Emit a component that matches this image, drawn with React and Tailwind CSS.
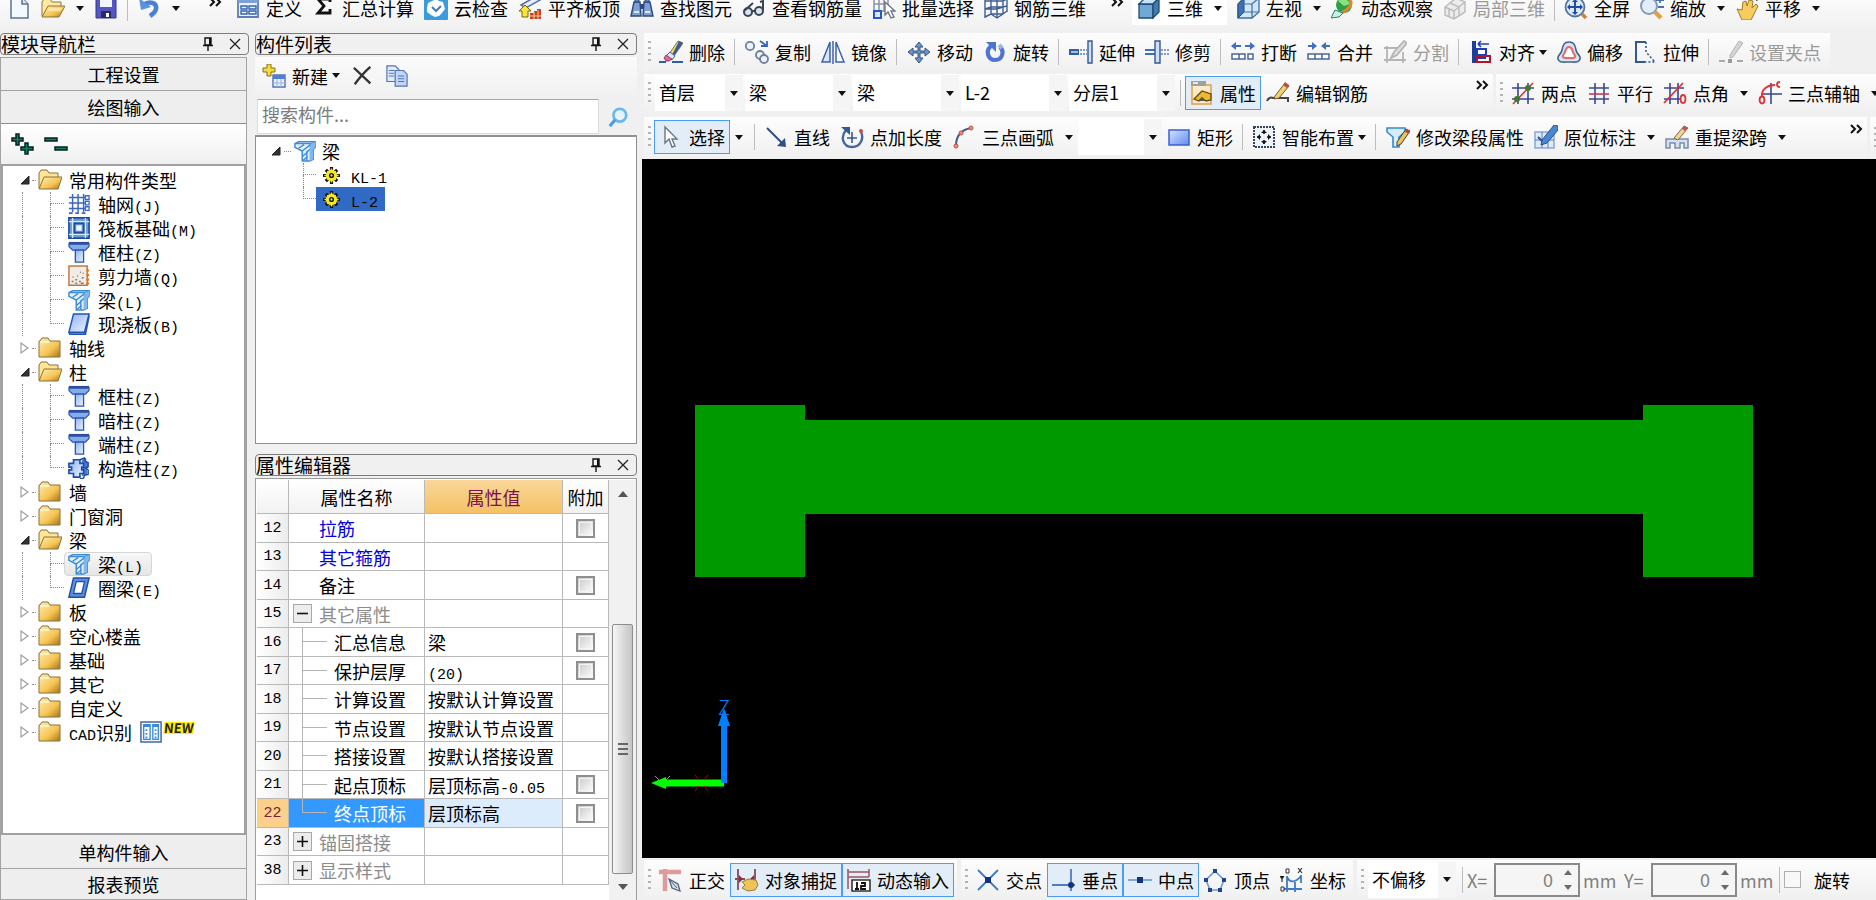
import { useState } from "react";
import clsx from "clsx";

const UI_FONT = "font-['Noto_Sans_CJK_SC',sans-serif]";
const MONO_FONT = "font-['Liberation_Mono','Noto_Sans_CJK_SC',monospace]";

const ICONS = {
  file: (
    <>
      <path d="M4 2h11l6 6v14H4z" fill="#f4f8ff" stroke="#5f7191" strokeWidth="1.5" />
      <path d="M15 2v6h6" fill="#dbe6f7" stroke="#5f7191" strokeWidth="1.5" />
    </>
  ),
  open: (
    <>
      <path d="M1 20V6l2-3h6l2 3h9v5" fill="#ffe9a3" stroke="#8e7440" />
      <path d="M1 21l6-11h17l-6 11z" fill="url(#folderFill)" stroke="#8e7440" />
      <path d="M8 12h13l-2 3H7z" fill="#ffe6a0" />
    </>
  ),
  save: (
    <>
      <path d="M2 2h18l2 2v18H2z" fill="#5556c4" stroke="#34348c" />
      <path d="M6 2h12v9H6z" fill="#f3f5fd" />
      <path d="M7 15h10v7H7z" fill="#2b2b63" />
      <path d="M12 17h3v4h-3z" fill="#fff" />
    </>
  ),
  undo: (
    <>
      <path d="M6 9c7-5 14-2 13 4-1 4-3 5-6 7" fill="none" stroke="#4a7fd8" strokeWidth="4.5" />
      <path d="M2 2l2 12 10-3z" fill="#5d8fe2" />
    </>
  ),
  define: (
    <>
      <path d="M2 3h20v18H2z" fill="#eef4fe" stroke="#5b7db8" strokeWidth="1.8" />
      <path d="M2 3h20v4H2z" fill="#7da0d8" />
      <path d="M5 10h6v3H5zM5 15h6v3H5zM13 10h7v3h-7zM13 15h7v3h-7z" fill="none" stroke="#3563b0" strokeWidth="1.4" />
    </>
  ),
  sigma: <path d="M18 6V3H6l6 7-6 7h12v-4" fill="none" stroke="#111" strokeWidth="2.8" />,
  cloud: (
    <>
      <rect x="0" y="0" width="24" height="24" rx="1" fill="#3c9bdc" />
      <path d="M12 3l3 2 4 1 1 4 1 3-3 4-3 3-4 1-4-2-4-3v-4l1-5 4-2z" fill="#fff" />
      <path d="M8 11l4 4 5-5" fill="none" stroke="#3c7fbc" strokeWidth="2" />
    </>
  ),
  slabTop: (
    <>
      <path d="M3 9L17 1l5 3-14 8z" fill="#e7ecf8" stroke="#5c6c9c" strokeWidth="1.5" />
      <path d="M1 15l6-6 6 6h-3v6H4v-6z" fill="#ffe23d" stroke="#7b6214" />
      <path d="M12 17h4v-2h3v-2h4v10H12z" fill="#c6451e" />
      <path d="M12 20h11M16 16v7M20 14v9" stroke="#f4c9a8" />
    </>
  ),
  binoculars: (
    <>
      <path d="M1 20L4 6h6l1 14zM13 20l1-14h6l3 14z" fill="#7fa0d2" stroke="#2e4a80" strokeWidth="1.4" />
      <path d="M10 8h4v5h-4z" fill="#2e4a80" />
      <path d="M5 1h4v5H5zM15 1h4v5h-4z" fill="#5b82bd" stroke="#2e4a80" />
      <path d="M4 16h5M15 16h5" stroke="#dce8fa" strokeWidth="2" />
    </>
  ),
  glasses: (
    <g fill="none" stroke="#3b4452" strokeWidth="2">
      <circle cx="6" cy="16" r="4" fill="#d8e5f5" />
      <circle cx="17" cy="15" r="4" fill="#d8e5f5" />
      <path d="M10 15h3M2 15l9-8M21 14V5l-3 1" />
    </g>
  ),
  batch: (
    <>
      <path d="M2 2h14v13H2zM2 8h14M7 2v13M12 2v13" fill="none" stroke="#8a93ab" strokeWidth="1.5" />
      <path d="M2 15h7v7H2z" fill="#dbe7ff" stroke="#2458c8" strokeWidth="2" />
      <path d="M13 6v13l3-3 3 6 3-1-3-6h4z" fill="#fff" stroke="#6e7687" strokeWidth="1.4" />
    </>
  ),
  cage: (
    <path
      d="M1 2v20M7 1v17M13 2v20M19 1v17M23 1v15M1 5h18l4-2M1 13l6-2h12l4-1M1 21l6-3h12M7 18l6 4 6-4 4-3M13 22l6-4M1 13h12l6-2"
      fill="none"
      stroke="#3f5f94"
      strokeWidth="1.4"
    />
  ),
  cube: (
    <>
      <path d="M2 8h14v14H2z" fill="#6fa9d4" stroke="#1f4a78" strokeWidth="1.3" />
      <path d="M2 8l6-6h14l-6 6z" fill="#c5e3f6" stroke="#1f4a78" strokeWidth="1.3" />
      <path d="M16 8l6-6v14l-6 6z" fill="#3f7cb0" stroke="#1f4a78" strokeWidth="1.3" />
    </>
  ),
  cubeLeft: (
    <>
      <path d="M2 8l6-6h15v14l-7 6H2z" fill="#d2e6f6" stroke="#3e6ea6" strokeWidth="1.3" />
      <path d="M2 8l6-6v14l-6 6z" fill="#3e72b4" stroke="#1f4a88" />
      <path d="M8 16h15M16 8v14M2 8h14l7-6" fill="none" stroke="#3e6ea6" strokeWidth="1.2" />
    </>
  ),
  orbit: (
    <>
      <circle cx="13" cy="9" r="8" fill="#2ba04a" />
      <path d="M7 5c4-4 10-2 12 3l-6 2z" fill="#8be07f" />
      <path d="M18 4c6 3-2 11-8 13" stroke="#e0862c" strokeWidth="3" fill="none" />
      <path d="M0 22l4-8 8 3-4 4z" fill="#c6f0e1" stroke="#2a7e68" />
    </>
  ),
  partial: (
    <g fill="#ececec" stroke="#bdbdbd" strokeWidth="1.5">
      <path d="M2 11l11-9 9 4v10l-11 7-9-4z" />
      <path d="M2 11l9 4 11-9M11 15v8M7 7l9 4v9M6 13v8" fill="none" />
    </g>
  ),
  fullscreen: (
    <>
      <circle cx="11" cy="11" r="9.5" fill="#dbe9fb" stroke="#56749f" strokeWidth="1.8" />
      <path d="M11 3l3 3h-2v4h4V8l3 3-3 3v-2h-4v4h2l-3 3-3-3h2v-4H6v2l-3-3 3-3v2h4V6H8z" fill="#1d4ea8" />
      <path d="M18 18l4 4" stroke="#c98546" strokeWidth="3.5" />
    </>
  ),
  zoom: (
    <>
      <circle cx="9" cy="10" r="8" fill="#e3eefb" stroke="#8799b4" strokeWidth="2" />
      <path d="M15 16l6 6" stroke="#dba545" strokeWidth="4.5" />
      <path d="M16 4h8M20 1v6M18 11h6" stroke="#4870b4" strokeWidth="1.8" />
    </>
  ),
  hand: (
    <>
      <path d="M2 13l5 1 1-8 3-1 1 5 2-6 4 1-1 7 4-4 2 2-4 8-3 6H7z" fill="#f5cc5f" stroke="#a57a24" />
      <path d="M13 3l8-2 1 4" fill="none" stroke="#555" strokeWidth="1.5" />
    </>
  ),
  erase: (
    <>
      <path d="M10 14L19 1l5 2-9 13z" fill="#f6d86c" stroke="#8b7a46" />
      <path d="M20 1l4 2-9 13-2-1z" fill="#3c5c97" />
      <path d="M11 12l5 4-3 4-6-4z" fill="#dfe6f2" stroke="#4a5f8e" />
      <path d="M7 15l6 4-3 2H7l-2-3z" fill="#e85b9c" stroke="#8a4f66" />
      <path d="M0 22h7M13 22h11" stroke="#2b5fa8" strokeWidth="2.2" />
    </>
  ),
  copy: (
    <g fill="#edf1f8" stroke="#6f7f99" strokeWidth="1.8">
      <circle cx="5" cy="6" r="4.2" />
      <circle cx="15" cy="15" r="4" />
      <circle cx="19" cy="19" r="4" />
      <path d="M15 1l7 5M22 1v5h-6" fill="none" stroke="#3367bd" />
    </g>
  ),
  mirror: (
    <>
      <path d="M9 2v20H1z" fill="#d7e6fa" stroke="#3c62a8" strokeWidth="1.5" />
      <path d="M15 2v20h8z" fill="#fff" stroke="#3c62a8" strokeWidth="1.5" />
      <path d="M12 1v23" stroke="#3c62a8" strokeWidth="1.5" />
    </>
  ),
  move: (
    <path
      d="M12 2l4 5h-3v4h5V8l5 4-5 4v-3h-5v5h3l-4 5-4-5h3v-5H6v3l-5-4 5-4v3h5V7H8z"
      fill="#6f94c4"
      stroke="#345586"
    />
  ),
  rotate: (
    <>
      <path d="M8 6c-6 5-3 14 4 14s10-8 5-13" fill="none" stroke="#4e74d0" strokeWidth="4.2" />
      <path d="M3 2h10v10z" fill="#4e74d0" />
      <path d="M19 8l-3-3" stroke="#9db6ea" strokeWidth="4" />
    </>
  ),
  extend: (
    <>
      <path d="M0 9h10v6H0z" fill="#2f5f9c" />
      <path d="M2 12h7" stroke="#d9e7fa" strokeWidth="1.4" />
      <path d="M11 10h7M11 14h7" stroke="#5d7fb4" strokeWidth="1.5" strokeDasharray="2 1" />
      <path d="M19 1h4v22h-4z" fill="#cfe0f5" stroke="#35588f" strokeWidth="1.4" />
    </>
  ),
  trim: (
    <>
      <path d="M0 10h10M0 14h10" stroke="#3d6fb4" strokeWidth="1.8" />
      <path d="M10 1h5v22h-5z" fill="#cfe0f5" stroke="#35588f" strokeWidth="1.4" />
      <path d="M16 10h8M16 14h8" stroke="#5d7fb4" strokeWidth="1.5" strokeDasharray="2 1" />
    </>
  ),
  split2: (
    <>
      <path d="M0 6l5-4v3h5v2H5v3zM24 6l-5-4v3h-5v2h5v3z" fill="#3f6fc4" />
      <path d="M1 14h13v5H1zM17 14h5v5h-5z" fill="#fff" stroke="#4a6898" strokeWidth="1.5" />
      <path d="M8 14v5" stroke="#4a6898" strokeWidth="1.5" />
    </>
  ),
  merge: (
    <>
      <path d="M10 6L5 2v3H1v2h4v3zM14 6l5-4v3h4v2h-4v3z" fill="#3f6fc4" />
      <path d="M1 14h21v5H1z" fill="#fff" stroke="#4a6898" strokeWidth="1.5" />
      <path d="M8 14v5M15 14v5" stroke="#4a6898" strokeWidth="1.5" />
    </>
  ),
  divide: (
    <g fill="none" stroke="#b5b5b5" strokeWidth="1.8">
      <path d="M1 8h14M4 6v17M1 20h22M20 12v11" />
      <path d="M8 18l3-6L21 1l3 2-10 12z" fill="#dedede" />
    </g>
  ),
  align: (
    <>
      <path d="M5 1v22" stroke="#1c3f98" strokeWidth="4" />
      <path d="M9 4h11M9 4l3-3M9 4l3 3" stroke="#1c3fb8" strokeWidth="1.6" />
      <path d="M8 9h9v6H8z" fill="#fff" stroke="#1c3fb8" strokeWidth="2" />
      <path d="M8 16h13v6H8z" fill="#fff" stroke="#b4122a" strokeWidth="2" />
      <path d="M8 18h9" stroke="#1c3fb8" strokeWidth="2" />
    </>
  ),
  offset: (
    <>
      <path
        d="M12 2c5 0 6 3 7 8s5 5 4 9-5 3-11 3-10 1-11-3 3-4 4-9 2-8 7-8z"
        fill="#d3e6f2"
        stroke="#42648f"
        strokeWidth="1.6"
      />
      <path
        d="M12 7c3 0 3 2 4 5s3 3 2 5-3 1-6 1-5 1-6-1 1-2 2-5 1-5 4-5z"
        fill="#fff"
        stroke="#e07070"
        strokeWidth="2.2"
      />
    </>
  ),
  stretch: (
    <>
      <path d="M13 2H3v20h9" fill="none" stroke="#35588f" strokeWidth="2" />
      <path d="M13 2v10l9 10H12" fill="none" stroke="#35588f" strokeWidth="1.6" strokeDasharray="2 2" />
    </>
  ),
  grips: (
    <>
      <path d="M11 15L20 1l4 2-10 14-3 1z" fill="#d4d4d4" stroke="#b4b4b4" />
      <path d="M0 21h6M18 21h6" stroke="#a9a9a9" strokeWidth="2" />
      <path d="M9 19h4v4H9z" fill="#9c9c9c" />
    </>
  ),
  props: (
    <>
      <path d="M2 4h19v19H2z" fill="#fdebc8" stroke="#e0a04a" strokeWidth="1.5" />
      <path d="M1 0h15v5H1z" fill="#a0a0a0" />
      <path d="M3 2h5" stroke="#fff" strokeWidth="1.5" />
      <path d="M4 18l8-8 9 3v6l-5 1-4-3-3 3z" fill="#eeb82e" stroke="#63480f" strokeWidth="1.3" />
      <path d="M8 20l4-4 3 4" fill="#555" />
    </>
  ),
  editRebar: (
    <>
      <path d="M1 20c1-3 4-4 6-3h15v4" fill="none" stroke="#444" strokeWidth="2" />
      <path d="M9 15L19 2l4 3-10 12-5 1z" fill="#f0cf78" stroke="#6e5a2a" />
      <path d="M19 1l4 3-2 3-4-3z" fill="#c94a3a" />
    </>
  ),
  twoPoint: (
    <>
      <path d="M7 2v21M17 2v21M1 7h22M1 18h22" stroke="#3a4692" strokeWidth="1.6" />
      <path d="M2 23L22 2" stroke="#e03030" strokeWidth="1.6" />
      <circle cx="17" cy="7" r="3" fill="#3e7a2c" />
      <circle cx="6" cy="18" r="3" fill="#3e7a2c" />
    </>
  ),
  parallel: (
    <>
      <path d="M8 2v21M17 2v21M2 7h20M2 18h20" stroke="#3a4692" strokeWidth="1.6" />
      <path d="M2 13h20" stroke="#c93a52" strokeWidth="1.6" />
    </>
  ),
  pointAngle: (
    <>
      <path d="M7 2v21M15 2v21M1 7h20M1 18h17" stroke="#3a4692" strokeWidth="1.6" />
      <path d="M1 22L20 2" stroke="#e03030" strokeWidth="1.8" />
      <ellipse cx="20" cy="18" rx="2.4" ry="4" fill="none" stroke="#e03030" strokeWidth="1.8" />
    </>
  ),
  threeAxis: (
    <>
      <path d="M13 2v21M4 13h20" stroke="#3a4692" strokeWidth="1.6" />
      <path d="M4 15C3 9 9 4 17 4" fill="none" stroke="#e03030" strokeWidth="1.8" />
      <ellipse cx="4" cy="19" rx="2.4" ry="3.5" fill="none" stroke="#e03030" strokeWidth="1.8" />
      <path d="M22 1c-4 0-4 5 0 5" fill="none" stroke="#e03030" strokeWidth="1.8" />
    </>
  ),
  cursor: <path d="M6 2v16l4-4 3 8 3-1-3-7h5z" fill="#fff" stroke="#6c7485" strokeWidth="1.4" />,
  line: (
    <>
      <path d="M3 3l17 17" stroke="#2f4f86" strokeWidth="2" />
      <path d="M22 22l-1-9-8 8z" fill="#2f4f86" />
    </>
  ),
  pointLength: (
    <>
      <path d="M6 5c-6 7-3 17 6 17s12-9 9-15" fill="none" stroke="#47679c" strokeWidth="2.4" />
      <path d="M1 2h9v8z" fill="#35588f" />
      <path d="M12 7v11M7 13h10" stroke="#35588f" strokeWidth="1.6" />
      <circle cx="21" cy="6" r="2" fill="#d24848" />
    </>
  ),
  arc: (
    <>
      <path d="M4 21C4 12 8 5 19 3" fill="none" stroke="#47597c" strokeWidth="2" />
      <g fill="#f08a7c" stroke="#c94d44">
        <circle cx="4" cy="21" r="2" />
        <circle cx="9" cy="8" r="2" />
        <circle cx="19" cy="3" r="2" />
      </g>
    </>
  ),
  rect: <path d="M2 5h20v15H2z" fill="url(#rectFill)" stroke="#3b5fd0" strokeWidth="1.5" />,
  smart: (
    <>
      <path d="M2 2h20v20H2z" fill="#eef3fa" stroke="#33455f" strokeWidth="2" strokeDasharray="2 1" />
      <path d="M12 5v4M12 15v4M5 12h4M15 12h4" stroke="#111" strokeWidth="1.6" />
      <path d="M9 8l3-3 3 3zM9 16l3 3 3-3zM8 9l-3 3 3 3zM16 9l3 3-3 3z" fill="#111" />
    </>
  ),
  editBeam: (
    <>
      <path d="M1 3h18v4l-6 5v10H7V12L1 7z" fill="#d9ecfd" stroke="#2f8ad8" strokeWidth="1.6" />
      <path d="M11 17L20 4l4 2-9 13-4 2z" fill="#eac45e" stroke="#4b3d24" />
      <path d="M20 4l4 2-1 3-4-2z" fill="#b9483a" />
    </>
  ),
  annotate: (
    <>
      <path d="M1 7h19v16H1z" fill="#dfeaf8" stroke="#8aa6d4" strokeWidth="1.5" />
      <path d="M1 15h19M8 7v16M14 16v7" stroke="#5b7db8" />
      <path d="M8 15L20 0l4 1v4L13 18l-6 2z" fill="#4a86d2" stroke="#2a508e" />
      <path d="M4 12l4 4" stroke="#2a508e" strokeWidth="2" />
    </>
  ),
  respan: (
    <>
      <path d="M1 23v-9h22v9h-4v-5h-4v5h-5v-5H5v5z" fill="#d5e0ef" stroke="#7b8da8" strokeWidth="1.5" />
      <path d="M9 13L19 1l4 2-10 12z" fill="#efd49a" stroke="#7d6a42" />
      <path d="M19 1l4 2-3 3-3-2z" fill="#bb5a50" />
    </>
  ),
  ortho: (
    <>
      <path d="M0 4h22M6 1v22" stroke="#dc9c9c" strokeWidth="4.5" />
      <path d="M10 11l9 5 2 7-8-3z" fill="#d5dde8" stroke="#50627c" strokeWidth="1.3" />
      <path d="M10 11l8 9" stroke="#50627c" />
    </>
  ),
  snap: (
    <>
      <path d="M3 1v21M20 1v12M0 11h10" stroke="#8a4a55" strokeWidth="1.8" />
      <path d="M4 7l4 4-4 4zM19 7l-4 4 4 4z" fill="#8a2f3f" />
      <path d="M7 14l6-3 8 1 2 5-3 5-7 1-6-3 3-3z" fill="#eec35a" stroke="#9f7c36" />
    </>
  ),
  dynInput: (
    <>
      <path d="M1 1v20M22 1v8M1 4h21M1 9h21" stroke="#a0525f" strokeWidth="1.5" />
      <path d="M5 12h18v11H5z" fill="#fff" stroke="#333" strokeWidth="1.6" />
      <path d="M10 14v7M8 21h4M14 15h4v3h-4v3h5" fill="none" stroke="#111" strokeWidth="1.8" />
    </>
  ),
  cross: (
    <>
      <path d="M2 2l20 20M22 2L2 22" stroke="#3d7ac8" strokeWidth="1.8" />
      <path d="M9 9h6v6H9z" fill="#12347c" />
    </>
  ),
  perp: (
    <>
      <path d="M0 17h23M19 1v22" stroke="#4a7dc6" strokeWidth="1.8" />
      <circle cx="19" cy="17" r="3" fill="#12347c" />
    </>
  ),
  mid: (
    <>
      <path d="M0 12h24" stroke="#7fa8dc" strokeWidth="2" />
      <path d="M9 9h6v6H9z" fill="#12347c" />
    </>
  ),
  vertex: (
    <>
      <path d="M11 3l9 9-4 10H6L2 12z" fill="none" stroke="#7298cc" strokeWidth="1.6" />
      <path d="M9 1h4v4H9zM0 10h4v4H0zM18 10h4v4h-4zM4 20h4v4H4zM14 20h4v4h-4z" fill="#1f448f" />
    </>
  ),
  coord: (
    <>
      <path d="M7 8v16M4 21h18M7 9c3 6 8 6 14-1M21 7v8M15 14v10" fill="none" stroke="#3d7ac8" strokeWidth="1.8" />
      <path d="M6 1h3v4H6zM1 19h3v4H1z" fill="none" stroke="#333" />
      <path d="M18 0l4 5M22 0l-4 5M0 8l2 3 2-3M2 11v3" stroke="#333" strokeWidth="1.2" />
    </>
  ),
  newItem: (
    <>
      <path d="M5 0h4v4h4v4H9v4H5V8H1V4h4z" fill="#f5dc3c" stroke="#86721a" />
      <path d="M11 11h12v12H11z" fill="#e8f0fc" stroke="#5474b0" strokeWidth="1.4" />
      <path d="M11 11h12v4H11z" fill="#4f7fd0" />
      <path d="M11 19h12M15 15v8M19 15v8" stroke="#9ab4dc" />
    </>
  ),
  remove: <path d="M2 3l18 17M20 2C13 8 8 14 3 21" fill="none" stroke="#333" strokeWidth="2.6" />,
  pages: (
    <g fill="#dfeaff" stroke="#4f74b8" strokeWidth="1.3">
      <path d="M1 1h9l4 4v13H1z" />
      <path d="M3 6h6M3 9h6M3 12h6" />
      <path d="M10 6h9l4 4v13H10z" fill="#c4d6f7" />
      <path d="M13 12h7M13 15h7M13 18h7" />
    </g>
  ),
  magnifier: (
    <>
      <circle cx="14" cy="10" r="7" fill="#e6f4ff" stroke="#6db7ec" strokeWidth="3" />
      <path d="M9 15l-6 7" stroke="#4a9fe0" strokeWidth="3.5" />
    </>
  ),
  folder: (
    <>
      <path d="M1 5h1l2-3h6l2 3h10v16H1z" fill="url(#folderFill)" stroke="#8b7138" />
      <path d="M2 6h9" stroke="#fff3c4" strokeWidth="2" />
    </>
  ),
  folderOpen: (
    <>
      <path d="M1 20V5l2-3h6l2 3h9v5" fill="#ffe596" stroke="#8b7138" />
      <path d="M1 21l5-12h18l-4 12z" fill="url(#folderFill)" stroke="#8b7138" />
    </>
  ),
  grid: (
    <>
      <path d="M5 1v20M11 1v20M17 1v20M1 5h18M1 11h18M1 17h18" stroke="#3b66c4" strokeWidth="1.6" />
      <g fill="#fff" stroke="#3b66c4" strokeWidth="1.4">
        <path d="M19 3h4v4h-4zM19 9h4v4h-4zM19 15h4v4h-4z" />
      </g>
      <path d="M1 21h4v2H1zM8 21h4v2H8zM15 21h4v2h-4z" fill="#3b66c4" />
    </>
  ),
  raft: (
    <>
      <path d="M1 1h22v22H1z" fill="#6f9dd8" stroke="#1c4e9c" strokeWidth="1.8" />
      <path d="M5 1v22M19 1v22M1 5h22M1 19h22" stroke="#d8e8fb" strokeWidth="1.4" />
      <path d="M7 7h10v10H7z" fill="#6f9dd8" stroke="#1c4e9c" strokeWidth="1.8" />
      <path d="M9 9h6v6H9z" fill="#eef5fe" />
    </>
  ),
  column: (
    <>
      <path d="M1 3h22v3l-4 4H5L1 6z" fill="#86a9ee" stroke="#2a55b0" strokeWidth="1.2" />
      <path d="M1 1h22v3H1z" fill="#2c4f9c" />
      <path d="M8 10h9v13H8z" fill="url(#blueFill)" stroke="#2a55b0" strokeWidth="1.4" />
    </>
  ),
  wall: (
    <>
      <path d="M1 1h20v21H1z" fill="#f3ece4" stroke="#c07a4a" strokeWidth="1.6" />
      <path
        d="M4 18h2M8 16h2M12 18h2M15 14h2M8 20h2M14 20h3M10 12h1M16 9h1M5 13h1M13 8h1"
        stroke="#777"
        strokeWidth="1.6"
      />
      <path d="M20 6h3M20 11h3M20 16h3M20 20h3" stroke="#df7722" strokeWidth="2.4" />
    </>
  ),
  beam: (
    <>
      <path d="M1 4l4-2h18v6l-2 2v11l-4 2H9V12L1 8z" fill="#e2f0fd" stroke="#3b8ad8" strokeWidth="1.6" />
      <path d="M1 4h17l5-2M18 4v6l-4 3v10M5 9l6-4M9 12l9-7M9 18l6-5M10 22l5-4" fill="none" stroke="#3b8ad8" strokeWidth="1.5" />
      <path d="M18 4l5-2v6l-2 2v11l-4 2V11z" fill="#7db8ef" />
    </>
  ),
  slab: (
    <>
      <path d="M6 1h17l-5 20H1z" fill="url(#blueFill)" stroke="#1f55b0" strokeWidth="1.6" />
      <path d="M1 21l1 2h17l4-20" fill="none" stroke="#1f55b0" strokeWidth="1.8" />
    </>
  ),
  tieColumn: (
    <>
      <path d="M15 3l5-2v4l2 1v5l-2 2 1 2v4l-6 2z" fill="#4a78cc" />
      <path
        d="M6 3h7v4h4v4h-2v3h2v4h-4v4H6v-4H1v-4h3v-3H1V7h5z"
        fill="url(#blueFill)"
        stroke="#1f4ea8"
        strokeWidth="1.8"
      />
      <path d="M13 3l5-2 1 4 3 1v5l-3 1 3 2v5l-4 1-1 3-4 1" fill="none" stroke="#1f459c" strokeWidth="1.5" />
    </>
  ),
  ringBeam: (
    <>
      <path d="M6 1h17l-5 21H1z" fill="#5f8fdc" stroke="#1f4ea8" strokeWidth="1.6" />
      <path d="M9 5h9l-3 13H6z" fill="#fff" stroke="#1f4ea8" strokeWidth="1.4" />
    </>
  ),
  cad: (
    <>
      <path d="M1 1h22v22H1z" fill="#f2f7fe" stroke="#47679c" strokeWidth="1.6" />
      <path d="M4 4h7v16H4zM14 4h6v16h-6z" fill="#fff" stroke="#3b8ad8" strokeWidth="1.5" />
      <path d="M4 5h7M14 5h6" stroke="#3b8ad8" strokeWidth="3" />
      <path d="M7 9v11M17 9v11" stroke="#3b8ad8" strokeWidth="2" strokeDasharray="2 2" />
    </>
  ),
  gear: (
    <>
      <path d="M12 0v24M0 12h24M4 4l16 16M20 4L4 20" stroke="#111" strokeWidth="4.5" />
      <circle cx="12" cy="12" r="8" fill="#f4ea1c" />
      <path d="M12 2v20M2 12h20M6 6l12 12M18 6L6 18" stroke="#f4ea1c" strokeWidth="2.2" />
      <circle cx="12" cy="12" r="2.6" fill="#f4ea1c" stroke="#111" strokeWidth="2" />
    </>
  ),
  expandAll: (
    <g fill="#14806c" stroke="#06231f" strokeWidth="1.5">
      <path d="M6 2h3v4h4v3H9v4H6V9H2V6h4z" />
      <path d="M15 11h3v4h5v3h-5v4h-3v-4h-4v-3h4z" />
    </g>
  ),
  collapseAll: (
    <path d="M1 6h12v3H1zM11 15h12v3H11z" fill="#14806c" stroke="#06231f" strokeWidth="1.5" />
  ),
};

function Icon({ name, className = "size-6" }) {
  return (
    <svg viewBox="0 0 24 24" className={clsx("shrink-0", className)} aria-hidden="true">
      {ICONS[name]}
    </svg>
  );
}

// gradients shared by the icons above
function IconDefs() {
  return (
    <svg className="absolute size-0" aria-hidden="true">
      <defs>
        <linearGradient id="folderFill" x1="0" y1="0" x2="1" y2="1">
          <stop offset="0" stopColor="#fff0b4" />
          <stop offset="0.6" stopColor="#f5c451" />
          <stop offset="1" stopColor="#a8741a" />
        </linearGradient>
        <linearGradient id="blueFill" x1="0" y1="0" x2="1" y2="1">
          <stop offset="0" stopColor="#8fb2f2" />
          <stop offset="1" stopColor="#eef4ff" />
        </linearGradient>
        <linearGradient id="rectFill" x1="0" y1="0" x2="1" y2="1">
          <stop offset="0" stopColor="#d5e2ff" />
          <stop offset="1" stopColor="#5f8df0" />
        </linearGradient>
      </defs>
    </svg>
  );
}

function Caret({ className }) {
  return (
    <svg viewBox="0 0 8 5" className={clsx("h-[5px] w-2 shrink-0", className)} aria-hidden="true">
      <path d="M0 0h8L4 5z" fill="#111" />
    </svg>
  );
}

function Grip() {
  return (
    <svg viewBox="0 0 3 22" className="h-[22px] w-[3px] shrink-0" aria-hidden="true">
      <path d="M0 0h3v2H0zM0 6h3v2H0zM0 12h3v2H0zM0 18h3v2H0z" fill="#b4b4b4" />
    </svg>
  );
}

function More({ className }) {
  return (
    <button type="button" aria-label="更多" className={clsx("shrink-0", className)}>
      <svg viewBox="0 0 13 10" className="h-[10px] w-[13px]">
        <path d="M1 1l4 4-4 4M7 1l4 4-4 4" fill="none" stroke="#111" strokeWidth="2" />
      </svg>
    </button>
  );
}

function Sep({ className }) {
  return <span className={clsx("mx-1 h-[26px] w-px shrink-0 bg-[#bdbdbd]", className)} />;
}

function Bar({ className, children }) {
  return (
    <div
      className={clsx(
        "flex min-w-0 items-center overflow-hidden bg-linear-to-b from-[#fdfdfd] to-[#f0f0f0]",
        className
      )}
    >
      {children}
    </div>
  );
}

function Tool({ icon, label, active, disabled, caret, className }) {
  return (
    <button
      type="button"
      disabled={disabled}
      aria-pressed={active}
      className={clsx(
        "flex h-[34px] shrink-0 items-center border px-1 whitespace-nowrap",
        active ? "border-[#4a9cf5] bg-[#e3edf8]" : "border-transparent",
        disabled && "text-[#9a9a9a]",
        className
      )}
    >
      <Icon name={icon} />
      {label && <span className="ml-1.5">{label}</span>}
      {caret && <Caret className={caret === "tight" ? "ml-1" : "ml-[11px]"} />}
    </button>
  );
}

function Combo({ label, value, className }) {
  return (
    <span className={clsx("relative h-9 shrink-0 bg-white", className)}>
      <select
        aria-label={label}
        defaultValue={value}
        className="h-full w-full appearance-none pb-0.5 pl-1 outline-none"
      >
        <option>{value}</option>
      </select>
      <span className="pointer-events-none absolute inset-y-0 right-0 flex w-[18px] items-center justify-center bg-[#f5f5f5]">
        <Caret />
      </span>
    </span>
  );
}

function TopToolbar() {
  return (
    <header className="h-[31px] shrink-0 overflow-hidden bg-linear-to-b from-[#fafafa] to-[#f0f0f0]">
      <div className="flex h-4 items-center pl-0.5">
        <Tool icon="file" />
        <Tool icon="open" caret />
        <Tool icon="save" />
        <Sep />
        <Tool icon="undo" caret />
        <More className="ml-6 pb-3" />
        <Tool icon="define" label="定义" className="ml-[9px]" />
        <Tool icon="sigma" label="汇总计算" />
        <Tool icon="cloud" label="云检查" />
        <Tool icon="slabTop" label="平齐板顶" />
        <Tool icon="binoculars" label="查找图元" />
        <Tool icon="glasses" label="查看钢筋量" />
        <Tool icon="batch" label="批量选择" />
        <Tool icon="cage" label="钢筋三维" />
        <More className="ml-5 pb-3" />
        <Tool icon="cube" label="三维" caret className="mr-1 ml-2 bg-white" />
        <Tool icon="cubeLeft" label="左视" caret />
        <Tool icon="orbit" label="动态观察" />
        <Tool icon="partial" label="局部三维" disabled />
        <Sep />
        <Tool icon="fullscreen" label="全屏" />
        <Tool icon="zoom" label="缩放" caret />
        <Tool icon="hand" label="平移" caret />
      </div>
    </header>
  );
}

function PanelTitle({ children }) {
  return (
    <div className="flex h-[22px] shrink-0 items-center rounded-sm border border-[#7d7d7d] bg-[#f0f0f0] text-[19px] leading-5">
      <h2 className="flex-1">{children}</h2>
      <button type="button" aria-label="固定" className="mr-4">
        <svg viewBox="0 0 10 14" className="h-[14px] w-[10px]">
          <path d="M2 1h6v7H2zM0 8.5h10M5 9v5" fill="none" stroke="#111" strokeWidth="1.4" />
          <path d="M7 1v7" stroke="#111" strokeWidth="2" />
        </svg>
      </button>
      <button type="button" aria-label="关闭" className="mr-[7px]">
        <svg viewBox="0 0 12 12" className="size-3">
          <path d="M1 1l10 10M11 1L1 11" stroke="#222" strokeWidth="1.3" />
        </svg>
      </button>
    </div>
  );
}

const TREE = [
  {
    label: "常用构件类型",
    open: true,
    children: [
      { icon: "grid", label: "轴网", hotkey: "(J)" },
      { icon: "raft", label: "筏板基础", hotkey: "(M)" },
      { icon: "column", label: "框柱", hotkey: "(Z)" },
      { icon: "wall", label: "剪力墙", hotkey: "(Q)" },
      { icon: "beam", label: "梁", hotkey: "(L)" },
      { icon: "slab", label: "现浇板", hotkey: "(B)" },
    ],
  },
  { label: "轴线" },
  {
    label: "柱",
    open: true,
    children: [
      { icon: "column", label: "框柱", hotkey: "(Z)" },
      { icon: "column", label: "暗柱", hotkey: "(Z)" },
      { icon: "column", label: "端柱", hotkey: "(Z)" },
      { icon: "tieColumn", label: "构造柱", hotkey: "(Z)" },
    ],
  },
  { label: "墙" },
  { label: "门窗洞" },
  {
    label: "梁",
    open: true,
    children: [
      { icon: "beam", label: "梁", hotkey: "(L)", selected: true },
      { icon: "ringBeam", label: "圈梁", hotkey: "(E)" },
    ],
  },
  { label: "板" },
  { label: "空心楼盖" },
  { label: "基础" },
  { label: "其它" },
  { label: "自定义" },
  { latin: "CAD", label: "识别", isNew: true },
];

function Expander({ open }) {
  return (
    <svg viewBox="0 0 10 12" className="h-3 w-[10px] shrink-0" aria-hidden="true">
      {open ? (
        <path d="M9 2v8H1z" fill="#333" stroke="#222" />
      ) : (
        <path d="M1 1l7 5-7 5z" fill="#fff" stroke="#a0a0a0" strokeWidth="1.2" />
      )}
    </svg>
  );
}

function Elbow({ last, className }) {
  return (
    <span className={clsx("flex h-full shrink-0 flex-col", className)}>
      <span className="h-1/2 border-b border-l border-dotted border-[#8a8a8a]" />
      {!last && <span className="h-1/2 border-l border-dotted border-[#8a8a8a]" />}
    </span>
  );
}

function Mono({ children }) {
  return <span className={clsx(MONO_FONT, "text-[15px] leading-none")}>{children}</span>;
}

function TreeLeaf({ item, last }) {
  return (
    <li className="flex h-6 items-center pl-[19px]">
      <span className="h-full w-7 shrink-0 border-l border-dotted border-[#8a8a8a]" />
      <Elbow last={last} className="w-[14px]" />
      <button
        type="button"
        className={clsx(
          "flex h-6 items-center rounded-sm border pr-2 pl-[3px]",
          item.selected
            ? "border-[#d6d6d6] bg-linear-to-b from-[#f8f8f8] to-[#e5e5e5]"
            : "border-transparent"
        )}
      >
        <Icon name={item.icon} className="size-[22px]" />
        <span className="ml-2">
          {item.label}
          <Mono>{item.hotkey}</Mono>
        </span>
      </button>
    </li>
  );
}

function NavPanel() {
  return (
    <aside className="flex w-[249px] shrink-0 flex-col pt-0.5">
      <PanelTitle>模块导航栏</PanelTitle>
      <div className="mt-0.5 mr-0.5 flex min-h-0 flex-1 flex-col border border-[#a3a3a3]">
        <button type="button" className="h-[33px] shrink-0 border-b border-[#a3a3a3] bg-[#eeeeee]">
          工程设置
        </button>
        <button type="button" className="h-[33px] shrink-0 border-b border-[#8c8c8c] bg-[#eeeeee]">
          绘图输入
        </button>
        <div className="flex h-10 shrink-0 items-center gap-2.5 bg-linear-to-b from-white to-[#f0f0f0] pl-[9px]">
          <button type="button" aria-label="全部展开">
            <Icon name="expandAll" />
          </button>
          <button type="button" aria-label="全部折叠">
            <Icon name="collapseAll" />
          </button>
        </div>
        <ul className="min-h-0 flex-1 overflow-hidden border-2 border-[#a0a0a5] bg-white pt-0.5">
          {TREE.map((node) => (
            <li key={node.label}>
              <div className="flex h-6 items-center pl-[17px]">
                <Expander open={node.open} />
                <span className="mx-0.5 w-1 shrink-0 border-b border-dotted border-[#8a8a8a]" />
                <Icon name={node.open ? "folderOpen" : "folder"} />
                <span className="ml-[7px]">
                  {node.latin && <Mono>{node.latin}</Mono>}
                  {node.label}
                </span>
                {node.isNew && (
                  <>
                    <Icon name="cad" className="ml-2 size-[22px]" />
                    <span className="mb-2 ml-0.5 -skew-x-6 bg-[#ffee00] text-[13px] leading-3 font-bold text-[#222]">
                      NEW
                    </span>
                  </>
                )}
              </div>
              {node.children && (
                <ul>
                  {node.children.map((item, i) => (
                    <TreeLeaf key={item.label} item={item} last={i === node.children.length - 1} />
                  ))}
                </ul>
              )}
            </li>
          ))}
        </ul>
        <button type="button" className="h-[34px] shrink-0 border-b border-[#a3a3a3] bg-[#eeeeee]">
          单构件输入
        </button>
        <button type="button" className="h-[30px] shrink-0 bg-[#eeeeee]">
          报表预览
        </button>
      </div>
    </aside>
  );
}

function ComponentList() {
  const [keyword, setKeyword] = useState("");

  return (
    <section className="flex flex-col">
      <PanelTitle>构件列表</PanelTitle>
      <div className="mt-0.5 flex h-[41px] items-center bg-linear-to-b from-[#fbfbfb] to-[#f0f0f0] pb-1 pl-[7px]">
        <button type="button" className="flex items-center">
          <Icon name="newItem" />
          <span className="ml-1.5">新建</span>
          <Caret className="ml-1" />
        </button>
        <button type="button" aria-label="删除" className="ml-3">
          <Icon name="remove" className="size-[22px]" />
        </button>
        <button type="button" aria-label="复制" className="ml-3">
          <Icon name="pages" className="size-[22px]" />
        </button>
      </div>
      <form className="flex h-[37px] items-center pl-0.5" onSubmit={(e) => e.preventDefault()}>
        <input
          type="text"
          aria-label="搜索构件"
          placeholder="搜索构件..."
          value={keyword}
          onChange={(e) => setKeyword(e.target.value)}
          className="h-[35px] min-w-0 flex-1 border border-[#dcdcdc] border-t-[#a8a8a8] bg-white pb-1.5 pl-1 outline-none placeholder:text-[#7c7c7c]"
        />
        <button type="submit" aria-label="搜索" className="flex w-[38px] justify-center">
          <Icon name="magnifier" className="size-[22px]" />
        </button>
      </form>
      <div className="h-[309px] border border-t-2 border-[#8f8f94] bg-white pt-0.5">
        <div className="flex h-6 items-center pl-[15px]">
          <Expander open />
          <span className="mx-[3px] w-[7px] border-b border-dotted border-[#8a8a8a]" />
          <Icon name="beam" className="size-[22px]" />
          <span className="ml-1.5">梁</span>
        </div>
        <ul>
          <li className="flex h-6 items-center pl-[47px]">
            <Elbow className="w-[13px]" />
            <button type="button" className="flex h-6 items-center pr-0.5 pl-[7px]">
              <Icon name="gear" className="size-[17px]" />
              <span className="ml-[11px]">
                <Mono>KL-1</Mono>
              </span>
            </button>
          </li>
          <li className="flex h-6 items-center pl-[47px]">
            <Elbow last className="w-[13px]" />
            <button type="button" className="flex h-6 items-center bg-[#316ac5] pr-[7px] pl-[7px]">
              <Icon name="gear" className="size-[17px]" />
              <span className="ml-[11px]">
                <Mono>L-2</Mono>
              </span>
            </button>
          </li>
        </ul>
      </div>
    </section>
  );
}

const PROPERTIES = [
  { no: 12, name: "拉筋", blue: true, check: true },
  { no: 13, name: "其它箍筋", blue: true },
  { no: 14, name: "备注", check: true },
  { no: 15, name: "其它属性", group: "open" },
  { no: 16, name: "汇总信息", child: true, value: "梁", check: true },
  { no: 17, name: "保护层厚", child: true, mono: "(20)", check: true },
  { no: 18, name: "计算设置", child: true, value: "按默认计算设置" },
  { no: 19, name: "节点设置", child: true, value: "按默认节点设置" },
  { no: 20, name: "搭接设置", child: true, value: "按默认搭接设置" },
  { no: 21, name: "起点顶标", child: true, value: "层顶标高", mono: "-0.05", check: true },
  { no: 22, name: "终点顶标", child: true, last: true, value: "层顶标高", check: true, selected: true },
  { no: 23, name: "锚固搭接", group: "closed" },
  { no: 38, name: "显示样式", group: "closed" },
];

function PropertyRow({ row, tall }) {
  const height = tall ? "h-[28px]" : "h-[27px]";

  return (
    <tr>
      <th
        scope="row"
        className={clsx(
          "border-r border-b border-[#b9b9b9] p-0 font-normal",
          row.selected
            ? "bg-[#fbd08a] text-[#7a1f3d]"
            : "bg-linear-to-r from-white to-[#ececec]"
        )}
      >
        <div className={clsx("flex items-center justify-center", height)}>
          <Mono>{row.no}</Mono>
        </div>
      </th>
      <td className={clsx("border-r border-b border-[#b9b9b9] p-0", row.selected && "bg-[#3399ff] text-white")}>
        <div className={clsx("flex items-center", height)}>
          {row.child && (
            <span className="ml-[13px] flex h-full w-[25px] shrink-0 flex-col">
              <span className="h-1/2 border-b border-l border-[#b4b4b4]" />
              {!row.last && <span className="h-1/2 border-l border-[#b4b4b4]" />}
            </span>
          )}
          {row.group && (
            <button
              type="button"
              aria-label={row.group === "open" ? "折叠" : "展开"}
              className="ml-1 flex size-[19px] shrink-0 items-center justify-center border border-[#a8a8a8] bg-[#ececec]"
            >
              <svg viewBox="0 0 11 11" className="size-[11px]">
                <path
                  d={row.group === "open" ? "M0 5.5h11" : "M0 5.5h11M5.5 0v11"}
                  stroke="#111"
                  strokeWidth="1.6"
                />
              </svg>
            </button>
          )}
          <span
            className={clsx(
              "whitespace-nowrap",
              row.child || row.group ? "ml-[7px]" : "ml-[30px]",
              row.blue && "text-[#0000e0]",
              row.group && "text-[#8c8c8c]"
            )}
          >
            {row.name}
          </span>
        </div>
      </td>
      <td className={clsx("border-r border-b border-[#b9b9b9] p-0", row.selected && "bg-[#ddecfc]")}>
        <div className={clsx("flex items-center pl-[3px]", height)}>
          <span className="whitespace-nowrap">
            {row.value}
            {row.mono && <Mono>{row.mono}</Mono>}
          </span>
        </div>
      </td>
      <td className="border-r border-b border-[#b9b9b9] p-0">
        {row.check && (
          <input
            type="checkbox"
            aria-label={`${row.name} 附加`}
            className="mx-auto block size-[19px] appearance-none border-2 border-[#8f8f8f] bg-linear-to-br from-[#c9c9c9] to-white outline-1 -outline-offset-4 outline-[#f4f4f4]"
          />
        )}
      </td>
    </tr>
  );
}

function ScrollArrow({ down }) {
  return (
    <svg viewBox="0 0 10 6" className="h-1.5 w-[10px]" aria-hidden="true">
      <path d={down ? "M0 0h10L5 6z" : "M0 6h10L5 0z"} fill="#555" />
    </svg>
  );
}

function PropertyEditor() {
  return (
    <section className="mt-[10px] flex min-h-0 flex-1 flex-col">
      <PanelTitle>属性编辑器</PanelTitle>
      <div className="mt-0.5 flex min-h-0 flex-1 overflow-hidden border border-b-0 border-[#9c9c9c] bg-white pt-px pl-px">
        <div className="min-w-0 flex-1">
          <table className="w-full table-fixed border-separate border-spacing-0">
            <colgroup>
              <col className="w-[32px]" />
              <col className="w-[136px]" />
              <col />
              <col className="w-[46px]" />
            </colgroup>
            <thead>
              <tr className="h-[34px] bg-linear-to-b from-white to-[#f1f1f1]">
                <th className="border-r border-b border-[#b9b9b9] p-0" aria-label="序号" />
                <th className="border-r border-b border-[#b9b9b9] p-0 font-normal">属性名称</th>
                <th className="border-r border-b border-[#b9b9b9] bg-linear-to-b from-[#fad698] to-[#f4c264] p-0 font-normal text-[#7a1050]">
                  属性值
                </th>
                <th className="border-r border-b border-[#b9b9b9] p-0 font-normal whitespace-nowrap">附加</th>
              </tr>
            </thead>
            <tbody>
              {PROPERTIES.map((row, i) => (
                <PropertyRow key={row.no} row={row} tall={i % 2 === 0} />
              ))}
            </tbody>
          </table>
        </div>
        <div className="flex w-[27px] shrink-0 flex-col items-center bg-[#f1f1f1]">
          <button type="button" aria-label="向上滚动" className="flex h-7 items-center">
            <ScrollArrow />
          </button>
          <div className="mt-[116px] flex h-[250px] w-[21px] flex-col items-center justify-center gap-[3px] rounded-xs border border-[#8d8d8d] bg-linear-to-r from-[#f6f6f6] to-[#c4c4c4]">
            <span className="h-0.5 w-[10px] bg-[#666]" />
            <span className="h-0.5 w-[10px] bg-[#666]" />
            <span className="h-0.5 w-[10px] bg-[#666]" />
          </div>
          <button type="button" aria-label="向下滚动" className="flex flex-1 items-center">
            <ScrollArrow down />
          </button>
        </div>
      </div>
    </section>
  );
}

function DrawingToolbars() {
  return (
    <div className="flex flex-col gap-[3px] pt-0.5 pl-0.5">
      <div className="flex h-[38px]">
        <Bar className="pr-1 pl-1">
          <Grip />
          <Tool icon="erase" label="删除" className="ml-[3px]" />
          <Sep className="mr-[5px]" />
          <Tool icon="copy" label="复制" />
          <Tool icon="mirror" label="镜像" />
          <Sep className="mr-[5px]" />
          <Tool icon="move" label="移动" />
          <Tool icon="rotate" label="旋转" />
          <Sep className="mr-[5px]" />
          <Tool icon="extend" label="延伸" />
          <Tool icon="trim" label="修剪" />
          <Sep className="mr-[5px]" />
          <Tool icon="split2" label="打断" />
          <Tool icon="merge" label="合并" />
          <Tool icon="divide" label="分割" disabled />
          <Sep className="mr-[5px]" />
          <Tool icon="align" label="对齐" caret="tight" />
          <Tool icon="offset" label="偏移" />
          <Tool icon="stretch" label="拉伸" />
          <Sep className="mr-[5px]" />
          <Tool icon="grips" label="设置夹点" disabled />
        </Bar>
      </div>

      <div className="flex h-10 gap-[3px]">
        <Bar className="flex-1 pr-1 pb-0.5 pl-1">
          <Grip />
          <div className="ml-1 flex gap-0.5">
            <Combo label="楼层" value="首层" className="w-[88px]" />
            <Combo label="构件大类" value="梁" className="w-[106px]" />
            <Combo label="构件类型" value="梁" className="w-[106px]" />
            <Combo label="构件" value="L-2" className="w-[106px]" />
            <Combo label="分层" value="分层1" className="w-[106px]" />
          </div>
          <Sep className="ml-[5px]" />
          <Tool icon="props" label="属性" active />
          <Tool icon="editRebar" label="编辑钢筋" />
          <More className="ml-auto pb-4" />
        </Bar>
        <Bar className="w-[380px] shrink-0 pb-0.5 pl-1">
          <Grip />
          <Tool icon="twoPoint" label="两点" className="ml-[3px]" />
          <Tool icon="parallel" label="平行" />
          <Tool icon="pointAngle" label="点角" caret />
          <Tool icon="threeAxis" label="三点辅轴" caret />
        </Bar>
      </div>

      <div className="flex h-[42px] gap-[3px]">
        <Bar className="flex-1 pr-1 pb-0.5 pl-1">
          <Grip />
          <Tool icon="cursor" label="选择" active className="ml-[3px]" />
          <button type="button" aria-label="选择方式" className="px-[5px]">
            <Caret />
          </button>
          <Sep className="ml-1.5" />
          <Tool icon="line" label="直线" />
          <Tool icon="pointLength" label="点加长度" />
          <Tool icon="arc" label="三点画弧" caret />
          <Combo label="画弧方式" value="" className="w-[84px]" />
          <Tool icon="rect" label="矩形" />
          <Sep />
          <Tool icon="smart" label="智能布置" caret="tight" />
          <Sep className="mr-[5px]" />
          <Tool icon="editBeam" label="修改梁段属性" />
          <Tool icon="annotate" label="原位标注" caret />
          <Tool icon="respan" label="重提梁跨" caret />
          <More className="ml-auto pb-4" />
        </Bar>
        <Bar className="w-1.5 shrink-0 pl-1">
          <Grip />
        </Bar>
      </div>
    </div>
  );
}

// front view of the beam between two columns, with the axis marker
function Viewport() {
  return (
    <div className="min-h-0 flex-1 overflow-hidden bg-black">
      <svg viewBox="0 0 1234 699" preserveAspectRatio="xMinYMin meet" className="h-full w-full">
        <g fill="#009900">
          <rect x="53" y="246" width="110" height="172" />
          <rect x="163" y="261" width="838" height="94" />
          <rect x="1001" y="246" width="110" height="172" />
        </g>
        <path d="M20 624h62" stroke="#00ff00" strokeWidth="7" />
        <path d="M9 624l15-6v12z" fill="#00ff00" />
        <path d="M13 617l5 5M28 617l-5 5" stroke="#00ff00" />
        <path d="M53 616l4 5M66 616l-4 5M53 632l4-5M66 632l-4-5" stroke="#c00000" />
        <path d="M82 624v-62" stroke="#0080ff" strokeWidth="6" />
        <path d="M82 549l6 18H76z" fill="#0080ff" />
        <text x="76" y="556" fill="#0080ff" fontSize="20" fontFamily="'Noto Sans CJK SC', sans-serif" fontWeight="300">
          Z
        </text>
      </svg>
    </div>
  );
}

function OffsetField({ id, label }) {
  return (
    <div className="flex shrink-0 items-center text-[#808080]">
      <label htmlFor={id} className="w-[27px]">
        {label}=
      </label>
      <span className="flex h-[34px] w-[86px] border-2 border-[#8a8a8a] bg-[#f5f5f5]">
        <input
          id={id}
          type="text"
          defaultValue="0"
          className="min-w-0 flex-1 pr-[9px] pb-0.5 text-right outline-none"
        />
        <span className="flex w-4 flex-col items-center justify-between py-[5px] pr-1">
          <button type="button" aria-label={`${label} 增加`}>
            <svg viewBox="0 0 8 5" className="block h-[5px] w-2">
              <path d="M0 5h8L4 0z" fill="#6a6a6a" />
            </svg>
          </button>
          <button type="button" aria-label={`${label} 减少`}>
            <svg viewBox="0 0 8 5" className="block h-[5px] w-2">
              <path d="M0 0h8L4 5z" fill="#6a6a6a" />
            </svg>
          </button>
        </span>
      </span>
      <span className="ml-[3px] w-[37px]">mm</span>
    </div>
  );
}

function StatusToolbar() {
  return (
    <footer className="flex h-[42px] shrink-0 gap-1 pt-0.5 pb-px pl-0.5">
      <Bar className="pr-[3px] pl-1">
        <Grip />
        <Tool icon="ortho" label="正交" className="ml-[3px]" />
        <Tool icon="snap" label="对象捕捉" active />
        <Tool icon="dynInput" label="动态输入" active />
      </Bar>
      <Bar className="pr-0.5 pl-1">
        <Grip />
        <Tool icon="cross" label="交点" className="ml-[3px]" />
        <Tool icon="perp" label="垂点" active />
        <Tool icon="mid" label="中点" active />
        <Tool icon="vertex" label="顶点" />
        <Tool icon="coord" label="坐标" />
      </Bar>
      <Bar className="flex-1 pl-1">
        <Grip />
        <Combo label="偏移方式" value="不偏移" className="ml-1 w-[88px]" />
        <Sep className="ml-1.5" />
        <OffsetField id="offset-x" label="X" />
        <span className="w-1 shrink-0" />
        <OffsetField id="offset-y" label="Y" />
        <Sep className="ml-0.5" />
        <label className="flex shrink-0 items-center">
          <input type="checkbox" className="size-[17px] appearance-none border border-[#b0b0b0] bg-[#f8f8f8]" />
          <span className="ml-[13px]">旋转</span>
        </label>
      </Bar>
    </footer>
  );
}

export default function App() {
  return (
    <div
      className={clsx(
        UI_FONT,
        "flex h-screen flex-col overflow-hidden bg-[#f0f0f0] text-[18px] leading-6 text-black"
      )}
    >
      <IconDefs />
      <TopToolbar />
      <div className="flex min-h-0 flex-1">
        <NavPanel />
        <div className="ml-1.5 flex w-[382px] shrink-0 flex-col pt-0.5">
          <ComponentList />
          <PropertyEditor />
        </div>
        <main className="ml-[5px] flex min-w-0 flex-1 flex-col">
          <DrawingToolbars />
          <Viewport />
          <StatusToolbar />
        </main>
      </div>
    </div>
  );
}
